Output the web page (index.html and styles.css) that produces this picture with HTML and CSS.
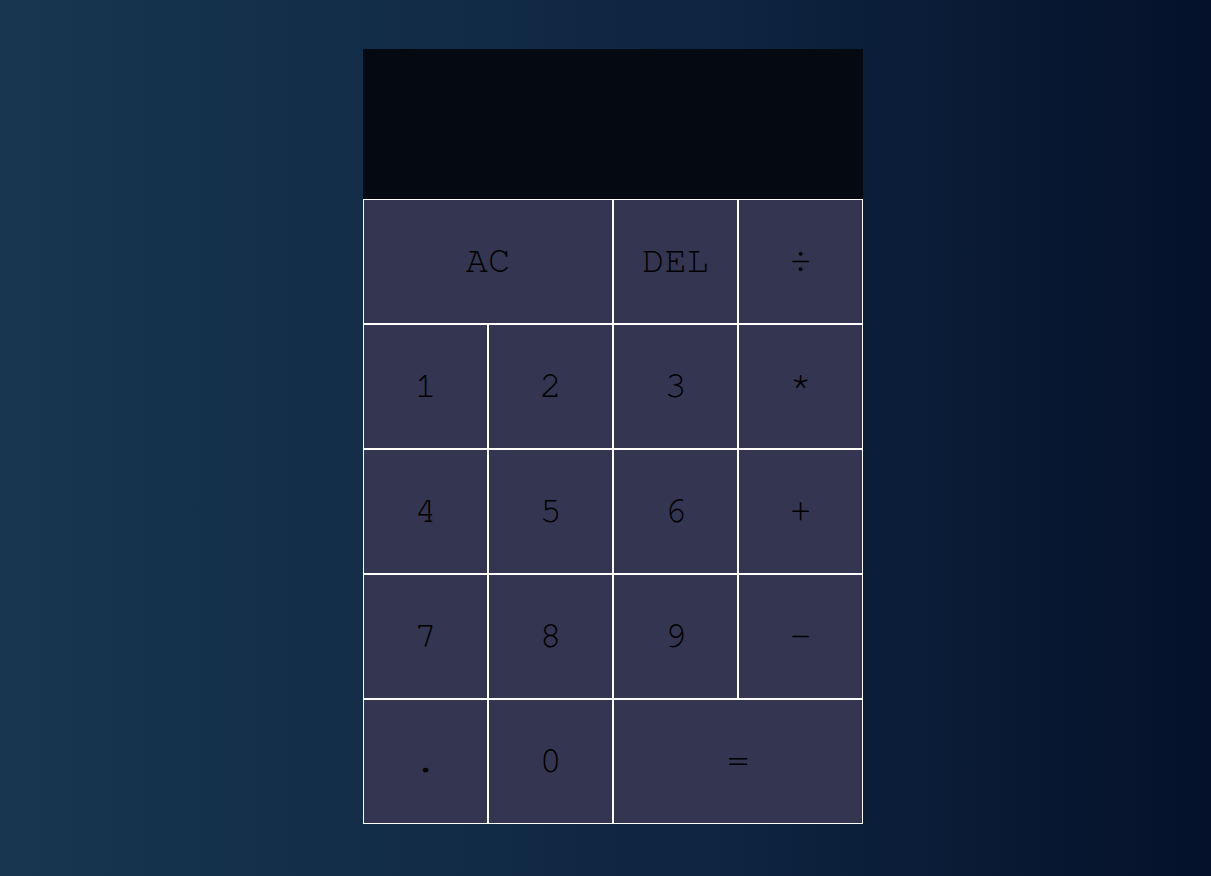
FILE: index.html
```html
<!DOCTYPE html>
<html lang="en">
<head>
<meta charset="utf-8">
<title>Calculator</title>
<link rel="stylesheet" href="styles.css">
</head>
<body>
<div class="calculator-grid">
  <div class="output">
    <div class="previous-operand"></div>
    <div class="current-operand"></div>
  </div>
  <button class="span-two">AC</button>
  <button>DEL</button>
  <button>÷</button>
  <button>1</button>
  <button>2</button>
  <button>3</button>
  <button>*</button>
  <button>4</button>
  <button>5</button>
  <button>6</button>
  <button>+</button>
  <button>7</button>
  <button>8</button>
  <button>9</button>
  <button>−</button>
  <button>.</button>
  <button>0</button>
  <button class="span-two">=</button>
</div>
</body>
</html>
```
FILE: styles.css
```css
*, *::before, *::after {
  box-sizing: border-box;
}

html, body {
  margin: 0;
  padding: 0;
}

body {
  background: linear-gradient(to right, #17364f, #0e2440 60%, #05112a);
  min-height: 100vh;
}

.calculator-grid {
  display: grid;
  justify-content: center;
  align-content: center;
  min-height: 100vh;
  padding: 0 0 3px 15px;
  grid-template-columns: repeat(4, 125px);
  grid-template-rows: minmax(150px, auto) repeat(5, 125px);
}

.calculator-grid > button {
  cursor: pointer;
  font-family: "Nimbus Mono PS", "FreeMono", Courier, "Courier New", monospace;
  font-size: 37px;
  font-weight: 400;
  color: #000;
  border: 1px solid #fff;
  outline: none;
  background-color: #343550;
  padding: 0 0 3px 0;
  margin: 0;
}

.span-two {
  grid-column: span 2;
}

.output {
  grid-column: 1 / -1;
  background-color: #050a12;
  display: flex;
  align-items: flex-end;
  justify-content: space-around;
  flex-direction: column;
  padding: 10px;
  word-wrap: break-word;
  word-break: break-all;
}
```
